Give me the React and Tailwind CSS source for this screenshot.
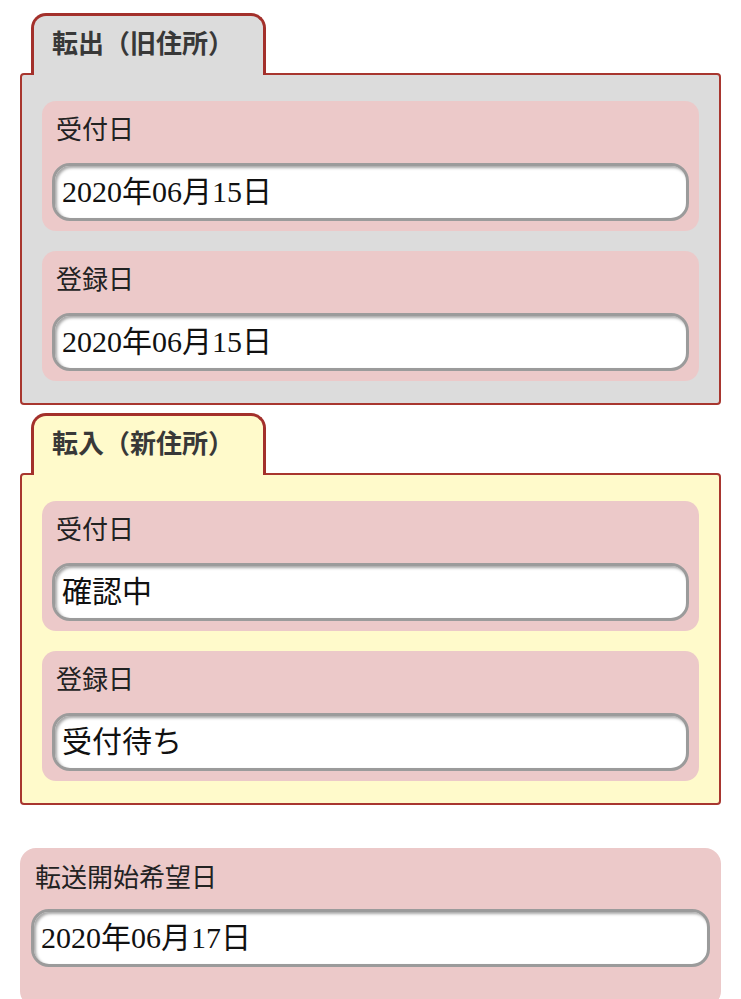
const FONT = "font-['Liberation_Serif','Noto_Sans_CJK_JP',serif]";

function DateField({ value }) {
  return (
    <div className="mt-[17px] flex h-[58px] items-center rounded-[18px] border-[3px] border-[#9b9b9b] bg-white pl-[7px] text-[30px] leading-none text-[#111] shadow-[inset_2px_2px_3px_rgba(0,0,0,0.35)]">
      {value}
    </div>
  );
}

function Card({ label, value }) {
  return (
    <div className="rounded-[14px] bg-[#ecc9c9] px-[10px] pt-[14px] pb-[10px]">
      <div className="pl-1 text-[26px] leading-[31px] text-[#222]">{label}</div>
      <DateField value={value} />
    </div>
  );
}

function Section({ title, bg, items }) {
  return (
    <div>
      <div
        className={`relative z-10 ml-[11px] -mb-[2px] h-[62px] w-[235px] rounded-t-[15px] border-[3px] border-b-0 border-[#a3302b] ${bg} pl-[18px] pt-[13px] text-[26px] leading-[31px] font-bold text-[#383838]`}
      >
        {title}
      </div>
      <div className={`flex flex-col gap-5 rounded-[4px] border-2 border-[#a8362f] ${bg} px-5 pt-[26px] pb-[22px]`}>
        {items.map((item) => (
          <Card key={item.label} label={item.label} value={item.value} />
        ))}
      </div>
    </div>
  );
}

export default function App() {
  return (
    <div className={`${FONT} min-h-screen bg-white px-5 pt-[13px]`}>
      <Section
        title="転出（旧住所）"
        bg="bg-[#dcdcdc]"
        items={[
          { label: "受付日", value: "2020年06月15日" },
          { label: "登録日", value: "2020年06月15日" },
        ]}
      />
      <div className="mt-[8px]">
        <Section
          title="転入（新住所）"
          bg="bg-[#fffacb]"
          items={[
            { label: "受付日", value: "確認中" },
            { label: "登録日", value: "受付待ち" },
          ]}
        />
      </div>
      <div className="mt-[43px] rounded-[16px] bg-[#ecc9c9] px-[11px] pt-[15px] pb-[40px]">
        <div className="pl-[4px] text-[26px] leading-[31px] text-[#222]">転送開始希望日</div>
        <div className="mt-[15px] flex h-[58px] items-center rounded-[18px] border-[3px] border-[#9b9b9b] bg-white pl-[7px] text-[30px] leading-none text-[#111] shadow-[inset_2px_2px_3px_rgba(0,0,0,0.35)]">
          2020年06月17日
        </div>
      </div>
    </div>
  );
}
